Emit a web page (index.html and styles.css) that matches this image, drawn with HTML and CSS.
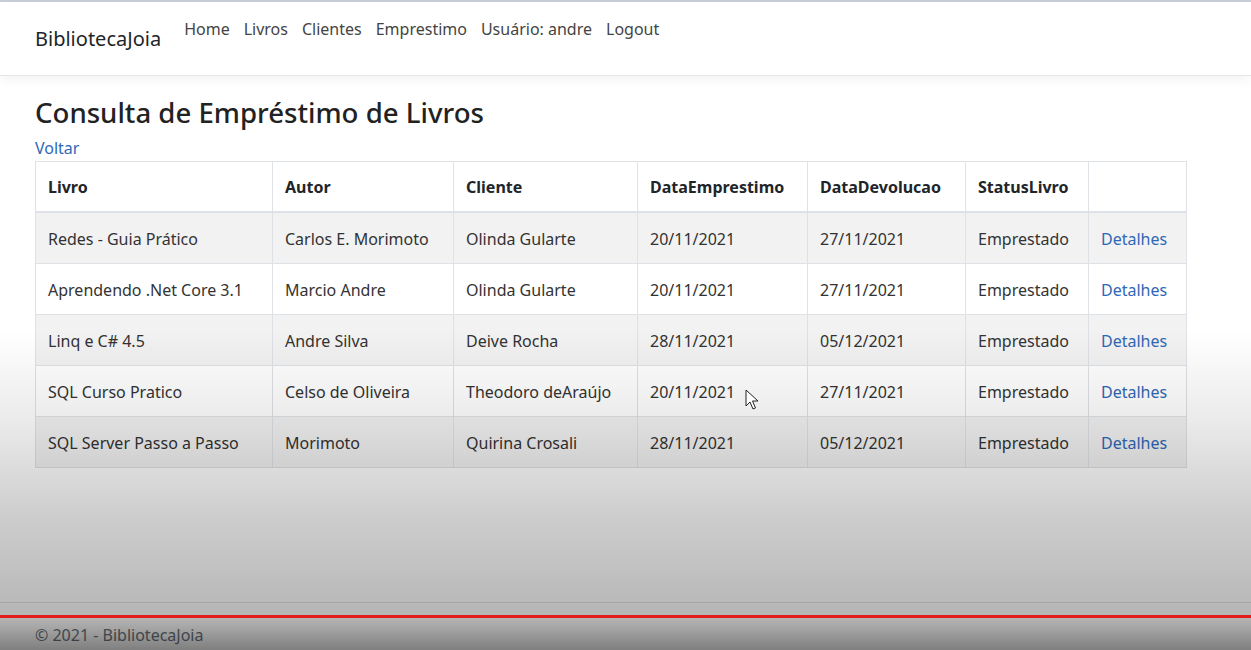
FILE: index.html
```html
<!DOCTYPE html>
<html lang="pt-br">
<head>
<meta charset="utf-8">
<title>Consulta de Empréstimo de Livros - BibliotecaJoia</title>
<link rel="stylesheet" href="styles.css">
</head>
<body>
<div class="page">
  <header class="navbar">
    <a class="brand" href="#">BibliotecaJoia</a>
    <nav class="nav">
      <a href="#">Home</a>
      <a href="#">Livros</a>
      <a href="#">Clientes</a>
      <a href="#">Emprestimo</a>
      <a href="#">Usuário: andre</a>
      <a href="#">Logout</a>
    </nav>
  </header>

  <main class="main">
    <h2 class="title">Consulta de Empréstimo de Livros</h2>
    <a class="link back" href="#">Voltar</a>
    <table class="grid">
      <colgroup>
        <col class="c1"><col class="c2"><col class="c3"><col class="c4"><col class="c5"><col class="c6"><col class="c7">
      </colgroup>
      <thead>
        <tr><th>Livro</th><th>Autor</th><th>Cliente</th><th>DataEmprestimo</th><th>DataDevolucao</th><th>StatusLivro</th><th></th></tr>
      </thead>
      <tbody>
        <tr><td>Redes - Guia Prático</td><td>Carlos E. Morimoto</td><td>Olinda Gularte</td><td>20/11/2021</td><td>27/11/2021</td><td>Emprestado</td><td><a class="link" href="#">Detalhes</a></td></tr>
        <tr><td>Aprendendo .Net Core 3.1</td><td>Marcio Andre</td><td>Olinda Gularte</td><td>20/11/2021</td><td>27/11/2021</td><td>Emprestado</td><td><a class="link" href="#">Detalhes</a></td></tr>
        <tr><td>Linq e C# 4.5</td><td>Andre Silva</td><td>Deive Rocha</td><td>28/11/2021</td><td>05/12/2021</td><td>Emprestado</td><td><a class="link" href="#">Detalhes</a></td></tr>
        <tr><td>SQL Curso Pratico</td><td>Celso de Oliveira</td><td>Theodoro deAraújo</td><td>20/11/2021</td><td>27/11/2021</td><td>Emprestado</td><td><a class="link" href="#">Detalhes</a></td></tr>
        <tr><td>SQL Server Passo a Passo</td><td>Morimoto</td><td>Quirina Crosali</td><td>28/11/2021</td><td>05/12/2021</td><td>Emprestado</td><td><a class="link" href="#">Detalhes</a></td></tr>
      </tbody>
    </table>
  </main>

  <footer class="footer">© 2021 - BibliotecaJoia</footer>
</div>

<div class="shade"></div>
<div class="progress"></div>
<svg class="cursor" width="14" height="22" viewBox="0 0 14 22">
  <path d="M1 1 L1 17 L5 13 L8 20 L10.5 19 L7.5 12 L13 12 Z" fill="#fff" stroke="#222" stroke-width="1"/>
</svg>
</body>
</html>
```

FILE: styles.css
```css
* { box-sizing: border-box; }
html, body { margin: 0; padding: 0; height: 100%; }
body {
  font-family: "Segoe UI", "Noto Sans", "Open Sans", sans-serif;
  font-size: 16px;
  line-height: 1.5;
  color: #212529;
  background: #fff;
  overflow: hidden;
}
.page {
  min-height: 650px;
  height: 650px;
  display: flex;
  flex-direction: column;
  border-top: 2px solid #c9cedb;
}
.navbar {
  height: 74px;
  display: flex;
  align-items: flex-start;
  padding: 0 0 0 35px;
  border-bottom: 1px solid #e5e5e5;
  box-shadow: 0 4px 12px rgba(0,0,0,0.05);
}
.brand {
  font-size: 20px;
  color: #212529;
  text-decoration: none;
  margin-top: 24px;
  line-height: 26px;
}
.nav {
  display: flex;
  gap: 14px;
  margin-left: 23px;
  margin-top: 15px;
}
.nav a {
  color: #444;
  text-decoration: none;
  line-height: 24px;
}
.main {
  padding: 0 0 0 35px;
  flex: 1;
}
.title {
  font-size: 27.6px;
  font-weight: 500;
  margin: 16px 0 0;
  line-height: 40px;
  color: #222;
}
.link { color: #2f68b5; text-decoration: none; }
.back { display: block; line-height: 24px; margin-top: 4px; }
.grid {
  border-collapse: collapse;
  table-layout: fixed;
  width: 1151px;
  margin-top: 1px;
}
.c1 { width: 237px; }
.c2 { width: 181px; }
.c3 { width: 184px; }
.c4 { width: 170px; }
.c5 { width: 158px; }
.c6 { width: 123px; }
.c7 { width: 98px; }
.grid th, .grid td {
  border: 1px solid #dee2e6;
  padding: 13px 12px;
  text-align: left;
  white-space: nowrap;
  line-height: 24px;
}
.grid th {
  font-weight: 700;
  color: #212529;
  border-bottom: 2px solid #dee2e6;
  padding-bottom: 12px;
}
.grid td { color: #333; padding-top: 14px; padding-bottom: 12px; }
.grid tbody tr:nth-child(odd) { background: #f2f2f2; }
.footer {
  height: 48px;
  border-top: 1px solid #e5e5e5;
  padding: 20px 0 0 35px;
  line-height: 24px;
  color: #6c757d;
}
.shade {
  position: fixed;
  inset: 0;
  pointer-events: none;
  background: linear-gradient(to bottom,
    rgba(0,0,0,0) 0px,
    rgba(0,0,0,0) 330px,
    rgba(0,0,0,0.08) 420px,
    rgba(0,0,0,0.2) 520px,
    rgba(0,0,0,0.27) 600px,
    rgba(0,0,0,0.3) 620px,
    rgba(0,0,0,0.5) 650px);
}
.progress {
  position: fixed;
  left: 0;
  right: 0;
  top: 615px;
  height: 3px;
  background: #e31b1b;
}
.cursor {
  position: fixed;
  left: 745px;
  top: 389px;
}
```
